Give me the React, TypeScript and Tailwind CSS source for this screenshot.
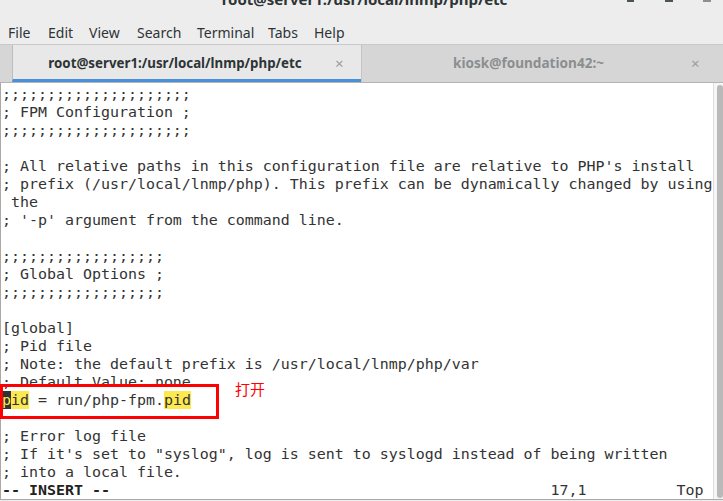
import React from "react";

const lines: string[] = [
  ";;;;;;;;;;;;;;;;;;;;;",
  "; FPM Configuration ;",
  ";;;;;;;;;;;;;;;;;;;;;",
  "",
  "; All relative paths in this configuration file are relative to PHP's install",
  "; prefix (/usr/local/lnmp/php). This prefix can be dynamically changed by using",
  " the",
  "; '-p' argument from the command line.",
  "",
  ";;;;;;;;;;;;;;;;;;",
  "; Global Options ;",
  ";;;;;;;;;;;;;;;;;;",
  "",
  "[global]",
  "; Pid file",
  "; Note: the default prefix is /usr/local/lnmp/php/var",
  "; Default Value: none",
  "__PID__",
  "",
  "; Error log file",
  '; If it\'s set to "syslog", log is sent to syslogd instead of being written',
  "; into a local file.",
];

const mono = { fontFamily: '"DejaVu Sans Mono", monospace' };

function Line({ text }: { text: string }) {
  if (text === "__PID__") {
    return (
      <div className="h-[18px] leading-[18px] whitespace-pre">
        <span className="bg-[#2e3436] text-[#fce94f]">p</span>
        <span className="bg-[#fce94f]">id</span>
        {" = run/php-fpm."}
        <span className="bg-[#fce94f]">pid</span>
      </div>
    );
  }
  return <div className="h-[18px] leading-[18px] whitespace-pre">{text || " "}</div>;
}

export default function App() {
  const sans = { fontFamily: '"Noto Sans", "Open Sans", sans-serif' };
  return (
    <div className="relative w-[723px] h-[501px] overflow-hidden bg-[#ededed]" style={sans}>
      {/* title bar */}
      <div className="h-[20px] grid grid-cols-[1fr_auto_1fr] overflow-hidden bg-[#ededed]">
        <div />
        <div className="text-[15px] font-bold text-[#2e3436] leading-[15px] mt-[-8px] pl-[6px]">
          root@server1:/usr/local/lnmp/php/etc
        </div>
        <div className="flex justify-end items-start">
          <div className="w-[7px] h-[2px] bg-[#4a5356] mr-[31px] ml-auto" />
          <div className="w-[8px] h-[2px] bg-[#4a5356] mr-[30px]" />
          <div className="w-[8px] h-[2px] bg-[#8a9090] mr-[12px]" />
        </div>
      </div>
      {/* menu bar */}
      <div className="h-[25px] flex items-center pl-[8px] text-[14px] text-[#2e3436] border-b border-[#c9c9c9]">
        <span className="w-[40px]">File</span>
        <span className="w-[41px]">Edit</span>
        <span className="w-[48px]">View</span>
        <span className="w-[60px]">Search</span>
        <span className="w-[71px]">Terminal</span>
        <span className="w-[46px]">Tabs</span>
        <span>Help</span>
      </div>
      {/* tab bar */}
      <div className="h-[38px] flex pl-[12px] bg-[#d6d6d6] border-b border-[#b4b4b4]">
        <div className="w-[349px] flex items-center bg-[#e8e8e8] border-l border-[#bdbdbd] border-b-[3px] border-b-[#4a90d9]">
          <div className="flex-1 text-center text-[13.3px] font-bold text-[#2e3436] pl-[2px] pt-[3px]">
            root@server1:/usr/local/lnmp/php/etc
          </div>
          <div className="w-[10px] mr-[16px] text-[15px] text-[#9a9d9d] pt-[3px]">×</div>
        </div>
        <div className="flex-1 flex items-center border-l border-[#c4c4c4]">
          <div className="flex-1 text-center text-[13.6px] font-bold text-[#8b8e8f] pl-[4px]">
            kiosk@foundation42:~
          </div>
          <div className="w-[10px] mr-[22px] text-[15px] text-[#9a9d9d]">×</div>
        </div>
      </div>
      {/* terminal */}
      <div className="h-[417px] flex bg-white border-l border-b border-[#a9a9a9]">
        <div className="w-[712px] pl-[1px] pt-[2px] text-[14.95px] text-[#333333]" style={mono}>
          {lines.map((l, i) => (
            <Line key={i} text={l} />
          ))}
          <div className="h-[18px] leading-[18px] whitespace-pre">
            <span className="font-bold text-[#222222]">-- INSERT --</span>
            {" ".repeat(49)}
            {"17,1"}
            {" ".repeat(10)}
            {"Top"}
          </div>
        </div>
        <div className="flex-1 border-l border-[#dedede] bg-[#f6f6f6] pl-[3px] pt-[2px] pb-[1px]">
          <div className="h-full bg-[#b9b9b9] rounded-t-[3px] rounded-b-[3px]" />
        </div>
      </div>
      {/* annotation overlay */}
      <div className="absolute left-[0px] top-[384px] w-[219px] h-[35px] border-[3px] border-[#ff0000]" />
      <div
        className="absolute left-[235px] top-[379px] text-[15px] text-[#ff0000] leading-[20px]"
        style={{ fontFamily: '"Noto Sans CJK SC", sans-serif' }}
      >
        打开
      </div>
    </div>
  );
}
